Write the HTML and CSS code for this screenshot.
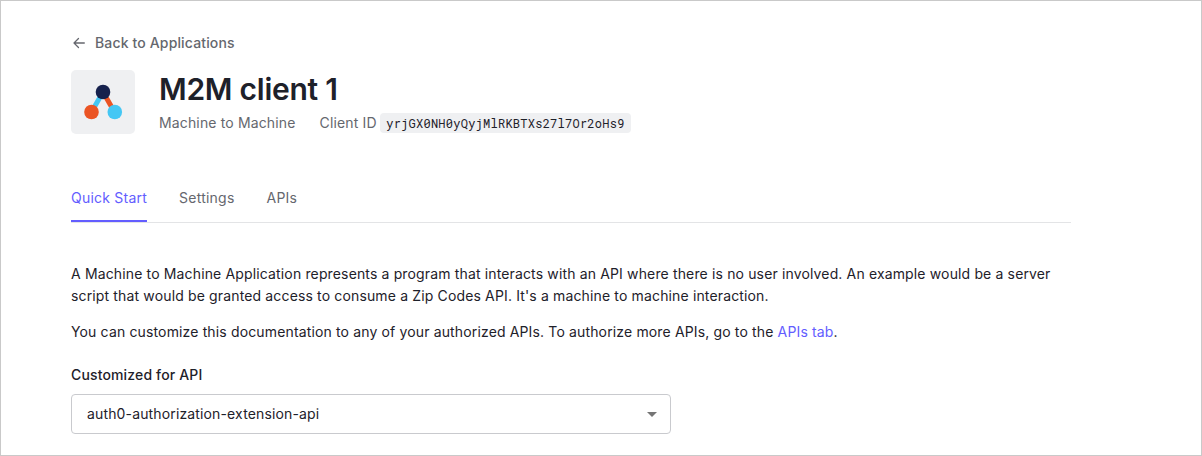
FILE: index.html
```html
<!DOCTYPE html>
<html lang="en">
<head>
<meta charset="utf-8">
<title>M2M client 1</title>
<link rel="stylesheet" href="styles.css">
</head>
<body>
<main class="page">
  <a class="back"><svg class="back-icon" width="16" height="16" viewBox="0 0 16 16" fill="none" stroke="#65676e" stroke-width="1.3" stroke-linecap="round" stroke-linejoin="round"><path d="M13.300 8H3M7.500 3.500L3 8l4.500 4.500"/></svg><span>Back to Applications</span></a>
  <header class="header">
    <div class="logo">
      <svg width="64" height="64" viewBox="0 0 64 64"><path d="M32 22L20.500 42" stroke="#44c7f4" stroke-width="5"/><path d="M32 22L43.500 42" stroke="#eb5424" stroke-width="5"/><circle cx="32" cy="22" r="7.300" fill="#16214d"/><circle cx="20.500" cy="42" r="7.300" fill="#eb5424"/><circle cx="43.800" cy="42" r="7.300" fill="#44c7f4"/></svg>
    </div>
    <div class="heading">
      <h1 class="title">M2M client 1</h1>
      <div class="meta"><span>Machine to Machine</span><span class="client"><span>Client ID</span><code class="code">yrjGX0NH0yQyjMlRKBTXs27l7Or2oHs9</code></span></div>
    </div>
  </header>
  <nav class="tabs"><a class="tab active">Quick Start</a><a class="tab">Settings</a><a class="tab">APIs</a></nav>
  <p class="text">A Machine to Machine Application represents a program that interacts with an API where there is no user involved. An example would be a server<br>script that would be granted access to consume a Zip Codes API. It's a machine to machine interaction.</p>
  <p class="text">You can customize this documentation to any of your authorized APIs. To authorize more APIs, go to the <a class="link">APIs tab</a>.</p>
  <div class="label">Customized for API</div>
  <div class="select"><span>auth0-authorization-extension-api</span><svg width="10" height="5" viewBox="0 0 10 5"><path d="M0 0h10L5 5z" fill="#757575"/></svg></div>
</main>
</body>
</html>
```
FILE: styles.css
```css
* { box-sizing: border-box; }
body { margin: 0; background: #fff; color: #1e212a; font: 14px/22px Inter, sans-serif; letter-spacing: 0.145px; }
.page { height: 456px; border: 1px solid #c9c9c9; padding: 31px 130px 0 70px; overflow: hidden; }
.back { display: flex; align-items: center; gap: 8px; height: 22px; color: #65676e; font-weight: 500; }
.header { display: flex; gap: 24px; height: 64px; margin-top: 16px; }
.logo { width: 64px; height: 64px; border-radius: 5px; background: #eff0f2; }
.title { margin: -1px 0 0; font-size: 30px; line-height: 40px; font-weight: 600; letter-spacing: -0.25px; }
.meta { display: flex; gap: 24px; height: 24px; margin-top: 2px; align-items: center; color: #65676e; white-space: nowrap; }
.client { display: flex; gap: 3px; align-items: center; }
.code { font: 12px/20px "Roboto Mono", "Liberation Mono", monospace; letter-spacing: 0.25px; color: #1e212a; background: #eff0f2; border-radius: 4px; padding: 0 6px 0 6.5px; }
.tabs { display: flex; gap: 32px; height: 48px; margin: 41px 0 40px; border-bottom: 1px solid #e3e4e6; color: #65676e; letter-spacing: 0.23px; }
.tab { height: 47px; line-height: 46px; }
.active { color: #635dff; border-bottom: 2px solid #635dff; }
.text { margin: 0 0 14px; white-space: nowrap; }
.link { color: #635dff; }
.label { margin-top: 21px; font-weight: 500; }
.select { display: flex; align-items: center; justify-content: space-between; width: 600px; height: 40px; margin-top: 8px; padding: 0 13px 0 15px; border: 1px solid #c9cace; border-radius: 4px; }
```
